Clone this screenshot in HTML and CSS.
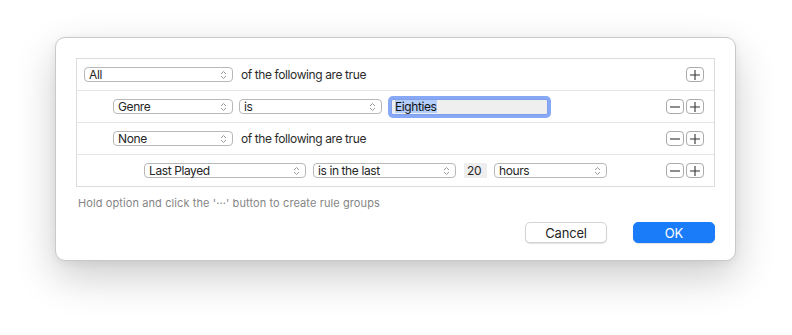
FILE: index.html
```html
<!DOCTYPE html>
<html lang="en">
<head>
<meta charset="UTF-8" />
<title>Smart Playlist</title>
<link rel="stylesheet" href="styles.css">
</head>
<body>

<div class="dialog">
  <div class="rules">

    <div class="row level-0">
      <div class="popup w-all"><span>All</span>
        <svg class="chev" width="7" height="10" viewBox="0 0 7 10"><path d="M1 4 3.5 1.5 6 4M1 6 3.5 8.5 6 6"/></svg>
      </div>
      <span class="label">of the following are true</span>
      <div class="actions">
        <button class="sq">
          <svg width="10" height="10" viewBox="0 0 10 10"><path d="M0 5h10M5 0v10"/></svg>
        </button>
      </div>
    </div>

    <div class="row level-1">
      <div class="popup w-key"><span>Genre</span>
        <svg class="chev" width="7" height="10" viewBox="0 0 7 10"><path d="M1 4 3.5 1.5 6 4M1 6 3.5 8.5 6 6"/></svg>
      </div>
      <div class="popup w-op"><span>is</span>
        <svg class="chev" width="7" height="10" viewBox="0 0 7 10"><path d="M1 4 3.5 1.5 6 4M1 6 3.5 8.5 6 6"/></svg>
      </div>
      <div class="field focused"><span class="sel">Eighties</span></div>
      <div class="actions">
        <button class="sq">
          <svg width="10" height="10" viewBox="0 0 10 10"><path d="M0 5h10"/></svg>
        </button>
        <button class="sq">
          <svg width="10" height="10" viewBox="0 0 10 10"><path d="M0 5h10M5 0v10"/></svg>
        </button>
      </div>
    </div>

    <div class="row level-1">
      <div class="popup w-key"><span>None</span>
        <svg class="chev" width="7" height="10" viewBox="0 0 7 10"><path d="M1 4 3.5 1.5 6 4M1 6 3.5 8.5 6 6"/></svg>
      </div>
      <span class="label">of the following are true</span>
      <div class="actions">
        <button class="sq">
          <svg width="10" height="10" viewBox="0 0 10 10"><path d="M0 5h10"/></svg>
        </button>
        <button class="sq">
          <svg width="10" height="10" viewBox="0 0 10 10"><path d="M0 5h10M5 0v10"/></svg>
        </button>
      </div>
    </div>

    <div class="row level-2 last">
      <div class="popup w-field"><span>Last Played</span>
        <svg class="chev" width="7" height="10" viewBox="0 0 7 10"><path d="M1 4 3.5 1.5 6 4M1 6 3.5 8.5 6 6"/></svg>
      </div>
      <div class="popup w-op"><span>is in the last</span>
        <svg class="chev" width="7" height="10" viewBox="0 0 7 10"><path d="M1 4 3.5 1.5 6 4M1 6 3.5 8.5 6 6"/></svg>
      </div>
      <div class="num">20</div>
      <div class="popup w-unit"><span>hours</span>
        <svg class="chev" width="7" height="10" viewBox="0 0 7 10"><path d="M1 4 3.5 1.5 6 4M1 6 3.5 8.5 6 6"/></svg>
      </div>
      <div class="actions">
        <button class="sq">
          <svg width="10" height="10" viewBox="0 0 10 10"><path d="M0 5h10"/></svg>
        </button>
        <button class="sq">
          <svg width="10" height="10" viewBox="0 0 10 10"><path d="M0 5h10M5 0v10"/></svg>
        </button>
      </div>
    </div>

  </div>

  <p class="hint">Hold option and click the '···' button to create rule groups</p>

  <div class="footer">
    <button class="btn">Cancel</button>
    <button class="btn primary">OK</button>
  </div>
</div>

</body>
</html>
```

FILE: styles.css
```css
html, body {
  height: 100%;
}
body {
  margin: 0;
  background: #fff;
  font-family: Inter, "Liberation Sans", sans-serif;
  font-size: 12px;
  letter-spacing: -0.4px;
  color: #262626;
  overflow: hidden;
}
.dialog {
  box-sizing: border-box;
  width: 681px;
  height: 224px;
  margin: 37px 0 0 55px;
  padding: 20px 20px 0 20px;
  background: #fff;
  border: 1px solid #c9c9c9;
  border-radius: 10px;
  box-shadow: 0 16px 40px rgba(0, 0, 0, 0.2), 0 2px 8px rgba(0, 0, 0, 0.06);
  display: flex;
  flex-direction: column;
}
.rules {
  border: 1px solid #dcdcdc;
}
.row {
  height: 32px;
  display: flex;
  align-items: center;
  border-bottom: 1px solid #e4e4e4;
  box-sizing: border-box;
  padding-right: 10px;
}
.row.last {
  border-bottom: none;
  height: 31px;
}
.level-0 { padding-left: 7px; }
.level-1 { padding-left: 36px; }
.level-2 { padding-left: 67px; }

.popup {
  box-sizing: border-box;
  height: 15px;
  border: 1px solid #b8b8b8;
  border-radius: 4px;
  background: #fff;
  display: flex;
  align-items: center;
  justify-content: space-between;
  padding: 0 5px 0 4px;
  margin-right: 6px;
  line-height: 13px;
}
.chev {
  fill: none;
  stroke: #9a9a9a;
  stroke-width: 1;
}
.w-all { width: 149px; }
.w-key { width: 120px; }
.w-op { width: 143px; margin-right: 8px; }
.w-field { width: 162px; margin-right: 7px; }
.w-unit { width: 113px; }

.label {
  margin-left: 2px;
  color: #2b2b2b;
}

.field {
  box-sizing: border-box;
  width: 157px;
  height: 16px;
  margin-left: 1px;
  background: #efefef;
  border: 1px solid #c4c4c4;
  display: flex;
  align-items: center;
  padding-left: 3px;
  line-height: 13px;
  color: #111;
}
.field.focused {
  box-shadow: 0 0 0 3px #86a8f6;
  border-radius: 2px;
  border-color: #7f9fe8;
}
.sel {
  background: #b3cefa;
}
.num {
  box-sizing: border-box;
  width: 23px;
  height: 15px;
  background: #eeeeee;
  margin-right: 7px;
  padding-left: 3px;
  line-height: 15px;
}

.actions {
  margin-left: auto;
  display: flex;
  gap: 2px;
}
.sq {
  box-sizing: border-box;
  width: 18px;
  height: 15px;
  padding: 0;
  border: 1px solid #ababab;
  border-radius: 4px;
  background: #fff;
  display: flex;
  align-items: center;
  justify-content: center;
}
.sq svg {
  stroke: #333;
  stroke-width: 1.1;
}

.hint {
  margin: 9px 0 0 2px;
  font-size: 11px;
  letter-spacing: 0.1px;
  color: #858585;
}
.footer {
  margin-top: 12px;
  display: flex;
  justify-content: flex-end;
  gap: 26px;
}
.btn {
  width: 82px;
  height: 21px;
  font-family: inherit;
  font-size: 13px;
  letter-spacing: -0.2px;
  color: #262626;
  background: #fff;
  border: 1px solid #d4d4d4;
  border-radius: 5px;
  box-shadow: 0 1px 1px rgba(0, 0, 0, 0.12);
}
.btn.primary {
  background: #1a7cf8;
  border-color: #1a7cf8;
  color: #fff;
}
```
